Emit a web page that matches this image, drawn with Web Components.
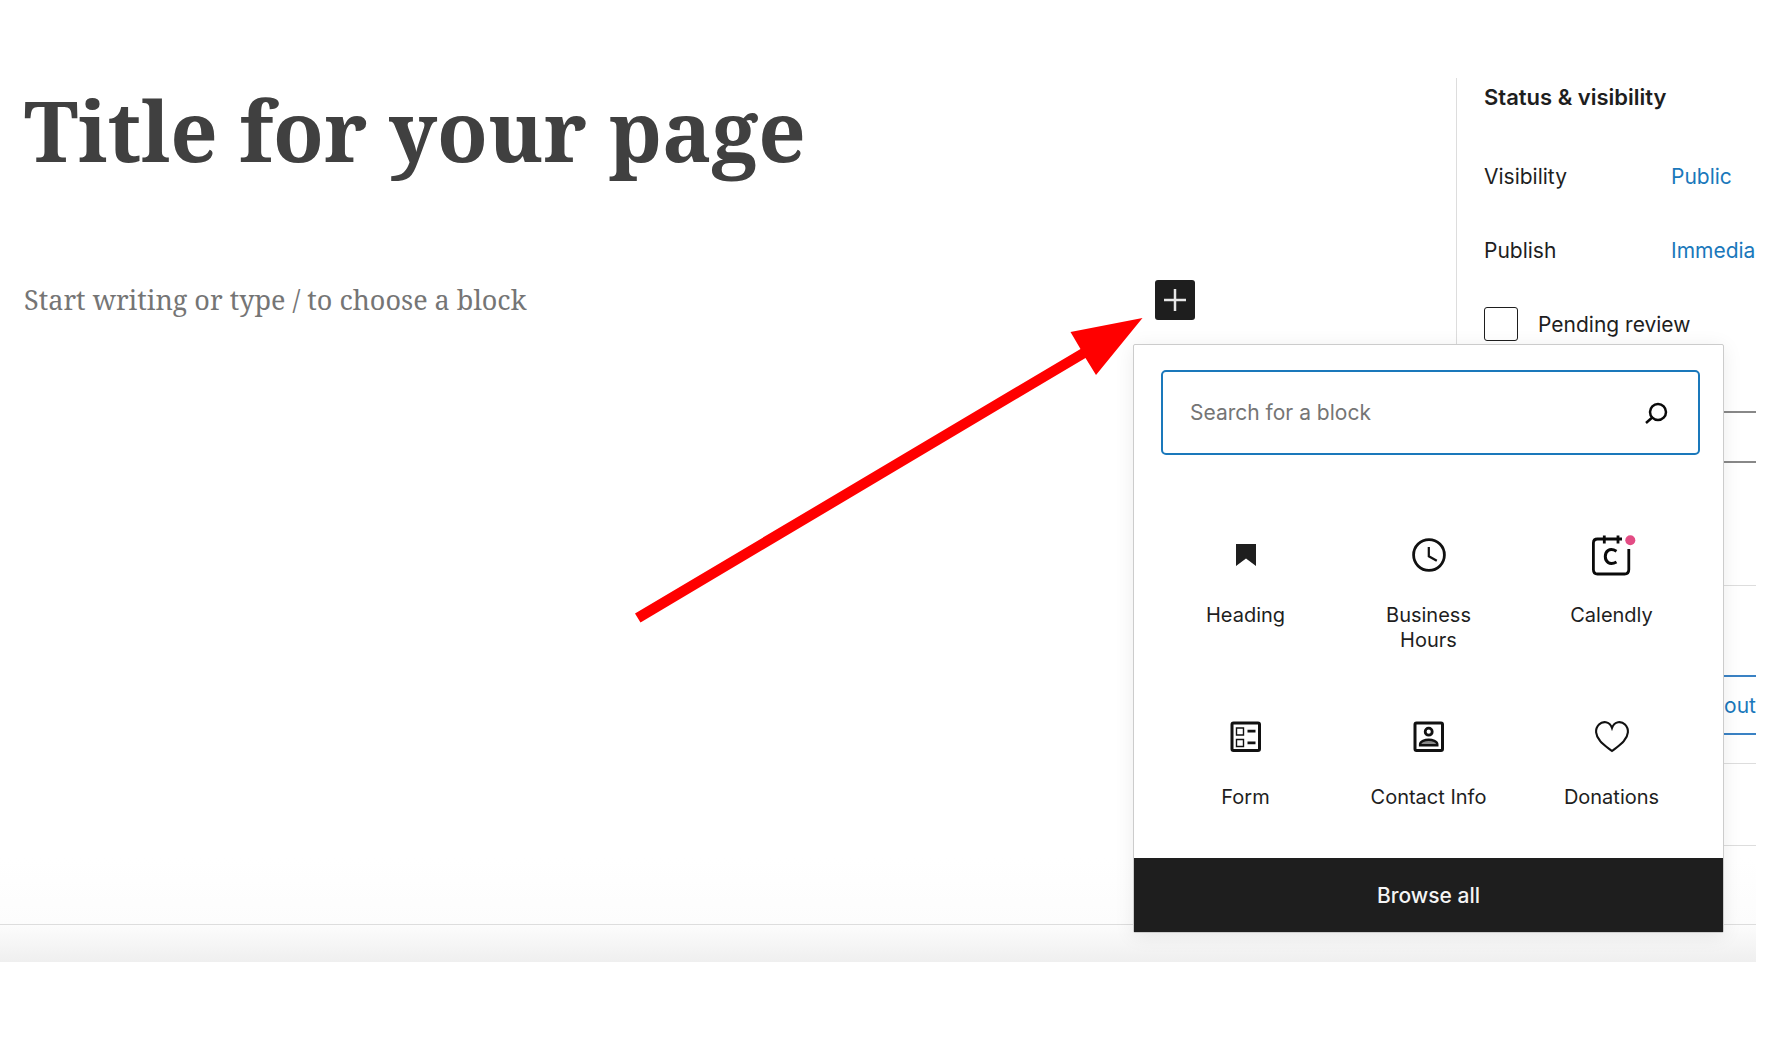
<!DOCTYPE html>
<html lang="en">
<head>
<meta charset="utf-8">
<title>Page editor</title>
<style>
  body { margin: 0; background: #fff; color: #1e1e1e; font-family: Inter, "Liberation Sans", sans-serif; font-size: 21px; }
</style>
</head>
<body>
<page-editor>
  <editor-canvas slot="canvas">
    <span slot="title">Title for your page</span>
    <span slot="prompt">Start writing or type / to choose a block</span>
    <block-inserter slot="inserter">
      <block-item label="Heading"><svg viewBox="0 0 44 44"><path d="M12 11h20v22l-10-7.500-10 7.500z" fill="#1e1e1e"/></svg></block-item>
      <block-item label="Business Hours"><svg viewBox="0 0 44 44" fill="none" stroke="#111"><circle cx="22" cy="22" r="15.400" stroke-width="2.800"/><path d="M21.800 14v9.300l8 4.500" stroke-width="2.200"/></svg></block-item>
      <block-item label="Calendly"><svg viewBox="1 0 44 44" fill="none" stroke="#0a0a0a" stroke-width="2.800"><path d="M33 6H8.500Q4.400 6 4.400 10V36.500Q4.400 41 8.500 41H35.500Q39.800 41 39.800 36.500V16"/><path d="M15.300 2.500v8M29 2.500v8"/><path d="M27.500 18.200C20 13.800 16.300 19 16.300 23.500S20 33 27.500 29" stroke-width="3"/><circle cx="41.300" cy="7.300" r="5" fill="#e34c84" stroke="none"/></svg></block-item>
      <block-item label="Form"><svg viewBox="0 0 44 44" fill="none" stroke="#111"><rect x="8" y="8" width="27.500" height="27.500" rx="1.500" stroke-width="3"/><path d="M12.500 13h7v7h-7zM12.500 24.500h7v7h-7z" stroke-width="1.400"/><path d="M23.500 16.200h8M23.500 27.900h8" stroke-width="2.700"/></svg></block-item>
      <block-item label="Contact Info"><svg viewBox="0 0 44 44" fill="none" stroke="#111"><rect x="8" y="8" width="27.500" height="27.500" rx="1.500" stroke-width="3"/><circle cx="21.700" cy="16.700" r="3.500" stroke-width="2.800"/><path d="M13.100 30.300v-1c0-3 5-4.600 8.600-4.600s8.600 1.600 8.600 4.600v1z" stroke-width="2.400" fill="#888"/></svg></block-item>
      <block-item label="Donations"><svg viewBox="0 0 44 44" fill="none" stroke="#111" stroke-width="2.100"><path d="M22 13C24.500 5.800 31.500 6 35 9.500C39.500 14 38.500 20.500 34 25.800C31 29.500 26.500 32.500 22 36C17.500 32.500 13 29.500 10 25.800C5.500 20.500 4.500 14 9 9.500C12.500 6 19.500 5.800 22 13Z"/></svg></block-item>
    </block-inserter>
  </editor-canvas>
  <settings-sidebar slot="sidebar">
    <setting-row label="Visibility">Public</setting-row>
    <setting-row label="Publish">Immedia</setting-row>
  </settings-sidebar>
</page-editor>

<script>
const define = (name, html, setup) => {
  const template = document.createElement('template');
  template.innerHTML = html;
  customElements.define(name, class extends HTMLElement {
    constructor() {
      super();
      this.attachShadow({ mode: 'open' }).append(template.content.cloneNode(true));
    }
    connectedCallback() { if (setup) setup(this, this.shadowRoot); }
  });
};

define('page-editor', `
<style>
  :host { display: block; padding: 78px 30px 0 0; }
  .frame { background: linear-gradient(#fff 780px, #fcfcfc 847px, #efefef); }
  .work { display: flex; }
  ::slotted(editor-canvas) { flex: 1; min-width: 0; }
  footer { height: 37px; border-top: 1px solid #ddd; }
</style>
<div class="frame">
  <div class="work"><slot name="canvas"></slot><slot name="sidebar"></slot></div>
  <footer></footer>
</div>`);

define('editor-canvas', `
<style>
  :host { display: block; }
  h1 { margin: 0; padding: 0 24px; font: 700 83px/104px "Noto Serif", "Liberation Serif", serif; color: #404040; }
  .row { display: flex; align-items: center; justify-content: space-between; margin-top: 98px; padding: 0 261px 0 24px; }
  p { margin: 0; font: 27px/40px "Noto Serif", "Liberation Serif", serif; color: #757575; }
</style>
<h1><slot name="title"></slot></h1>
<div class="row"><p><slot name="prompt"></slot></p><slot name="inserter"></slot></div>`);

define('block-inserter', `
<style>
  :host { display: block; position: relative; z-index: 2; }
  button { display: flex; align-items: center; justify-content: center; border: 0; padding: 0; font: inherit; cursor: pointer; background: #1e1e1e; color: #fff; }
  .add { width: 40px; height: 40px; border-radius: 3px; }
  .arrow { position: absolute; right: 52px; top: 38px; width: 508px; height: 305px; pointer-events: none; }
  .menu { position: absolute; left: -22px; top: 64px; width: 591px; box-sizing: border-box; border: 1px solid #ccc; border-radius: 2px; background: #fff; box-shadow: 0 3px 20px rgba(0,0,0,.08); }
  label { display: flex; align-items: center; margin: 25px 23px 0 27px; border: 2px solid #1a78bb; border-radius: 5px; height: 81px; padding: 0 29px 0 27px; }
  input { flex: 1; min-width: 0; border: 0; outline: 0; padding: 0; background: none; font: inherit; color: #1e1e1e; }
  input::placeholder { color: #757575; opacity: 1; }
  .grid { display: grid; grid-template-columns: repeat(3, 1fr); row-gap: 62px; margin: 78px 20px 48px; }
  .all { width: 100%; height: 74px; padding-top: 1px; color: #f4f4f4; font-weight: 500; }
</style>
<button class="add" type="button" aria-label="Add block"><svg width="22" height="22" viewBox="0 0 22 22"><path d="M11 0v22M0 11h22" stroke="#e8e8e8" stroke-width="2.500"/></svg></button>
<div class="menu">
  <label><input type="text" placeholder="Search for a block" aria-label="Search for a block"><svg width="26" height="26" viewBox="0 0 26 26" fill="none" stroke="#0a0a0a" stroke-width="2.500"><circle cx="15" cy="12" r="8"/><path d="M9.500 17.200 3 23"/></svg></label>
  <div class="grid"><slot></slot></div>
  <button class="all" type="button">Browse all</button>
</div>
<svg class="arrow" viewBox="0 0 508 305"><path d="M507.500 0 435.500 14 445.500 31 0 295.500 5.500 304.500 450.500 40 461 57z" fill="#f00"/></svg>`);

define('block-item', `
<style>
  :host { display: block; }
  button { display: flex; flex-direction: column; align-items: center; gap: 26px; width: 100%; border: 0; padding: 0 24px; background: none; color: #1e1e1e; font: inherit; font-size: 20px; line-height: 25px; cursor: pointer; }
  ::slotted(svg) { width: 44px; height: 44px; overflow: visible; }
</style>
<button type="button"><slot></slot><span class="label"></span></button>`,
(el, root) => { root.querySelector('.label').textContent = el.getAttribute('label'); });

define('setting-row', `
<style>
  :host { display: flex; line-height: 26px; margin-bottom: 48px; }
  span { width: 187px; flex: none; }
  a { color: #1a78bb; text-decoration: none; white-space: nowrap; }
</style>
<span></span><a href="#"><slot></slot></a>`,
(el, root) => { root.querySelector('span').textContent = el.getAttribute('label'); });

define('settings-sidebar', `
<style>
  :host { display: block; width: 300px; flex: none; box-sizing: border-box; border-left: 1px solid #ddd; overflow: hidden; color: #1e1e1e; }
  section { padding: 6px 0 0 27px; border-bottom: 1px solid #ddd; }
  h2 { margin: 0 0 54px; font-size: 22px; line-height: 26px; font-weight: 600; }
  .check { display: flex; align-items: center; gap: 20px; height: 34px; margin-top: -5px; white-space: nowrap; }
  input { box-sizing: border-box; margin: 0; border: 1px solid #555; background: #fff; }
  input[type=checkbox] { appearance: none; width: 34px; height: 34px; border: 1px solid #1e1e1e; border-radius: 3px; }
  .author { display: block; width: 100%; height: 52px; margin: 70px 0 122px; border-width: 2px 0; border-color: #888; border-radius: 0; }
  .actions { padding: 89px 0 28px; text-align: right; }
  button { width: 100%; height: 60px; padding: 0; border: 2px solid #3a82c4; border-width: 2px 0; background: none; color: #1a78bb; font: inherit; text-align: right; }
  .panel { height: 81px; padding: 0; }
  .last { height: 78px; padding: 0; border: 0; }
</style>
<section>
  <h2>Status &amp; visibility</h2>
  <slot></slot>
  <label class="check"><input type="checkbox">Pending review</label>
  <input class="author" type="text" aria-label="Author">
</section>
<section class="actions"><button type="button">out</button></section>
<section class="panel"></section>
<section class="last"></section>`);
</script>
</body>
</html>
